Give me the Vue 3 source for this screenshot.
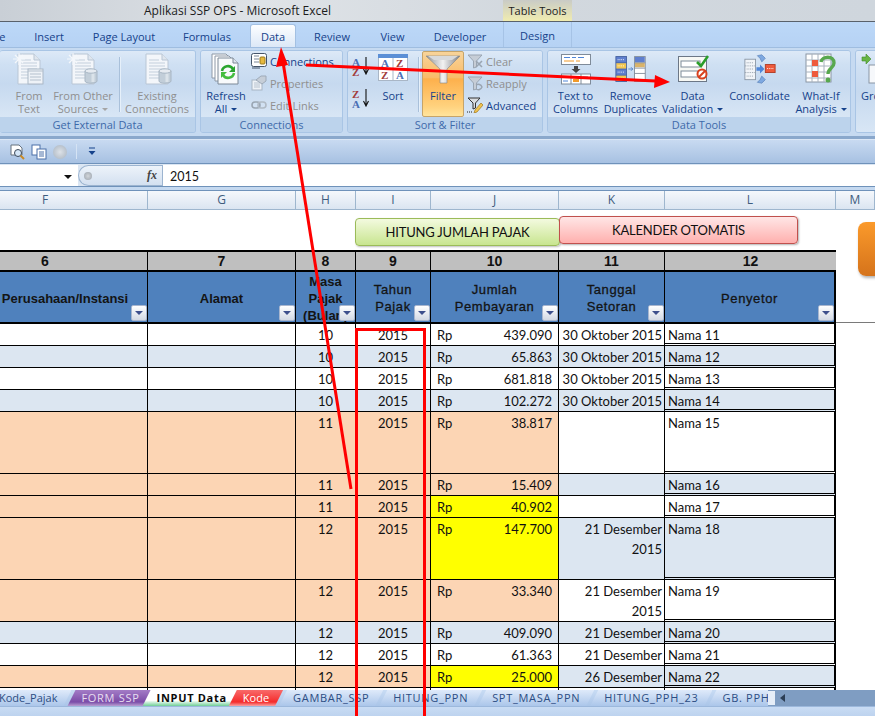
<template>
    <div class="excel">
        <svg class="defs" width="0" height="0">
            <symbol id="page" viewBox="0 0 32 32">
                <path d="M5 1H21L27 7V31H5Z" fill="#f3f6fa" stroke="#b9c6d5" />
                <path d="M21 1V7H27" fill="#dfe6ee" stroke="#b9c6d5" />
                <path d="M8 7H18M8 10H24M8 13H24M8 16H24M8 19H24M8 22H24M8 25H24" stroke="#c3cfdc" />
            </symbol>
            <symbol id="star" viewBox="0 0 12 12">
                <path d="M6 0V12M0 6H12M2 2L10 10M10 2L2 10" stroke="#f4f7fb" stroke-width="1.2" />
            </symbol>
            <symbol id="cyl" viewBox="0 0 14 16">
                <path d="M1 3V13C1 16 13 16 13 13V3Z" fill="#c2ced9" stroke="#a8b6c4" />
                <path d="M9 4V14" stroke="#dbe3ea" stroke-width="3" />
                <ellipse cx="7" cy="3" rx="6" ry="2.2" fill="#e6ebf1" stroke="#a8b6c4" />
            </symbol>
            <symbol id="funnel" viewBox="0 0 16 16">
                <path d="M1 2H15L9.5 8V14L6.5 15V8Z" fill="#c6cdd6" stroke="#9aa5b2" />
            </symbol>
        </svg>

        <header class="titlebar">
            <span class="title">Aplikasi SSP OPS - Microsoft Excel</span>
            <span class="context">Table Tools</span>
        </header>

        <nav class="tabs">
            <span v-for="tab in ribbonTabs" :key="tab.name" class="tab" :class="{ 'tab_active': tab.name === 'Data', 'tab_design': tab.name === 'Design' }" :style="{ width: tab.w + 'px' }">{{ tab.name }}</span>
        </nav>

        <div class="ribbon">
            <section class="group group-ext">
                <div class="group-body">
                    <div class="big big-text">
                        <svg class="ico" viewBox="0 0 32 32">
                            <use href="#page" width="32" height="32" />
                            <use href="#star" x="0" y="0" width="12" height="12" />
                            <rect x="15" y="16" width="15" height="15" fill="#eef2f7" stroke="#aab7c6" />
                            <path d="M15 18H30M17 21H28M17 24H28M17 27H28" stroke="#b4c0cd" />
                        </svg>
                        <span class="off">From<br>Text</span>
                    </div>
                    <div class="big big-other">
                        <svg class="ico" viewBox="0 0 32 32">
                            <use href="#page" width="32" height="32" />
                            <use href="#star" x="0" y="0" width="12" height="12" />
                            <use href="#cyl" x="17" y="15" width="14" height="16" />
                        </svg>
                        <span class="off">From Other<br>Sources <i class="caret caret_off"></i></span>
                    </div>
                    <div class="sep sep-ext"></div>
                    <div class="big big-exist">
                        <svg class="ico" viewBox="0 0 32 32">
                            <use href="#page" width="32" height="32" />
                            <use href="#cyl" x="17" y="15" width="14" height="16" />
                        </svg>
                        <span class="off">Existing<br>Connections</span>
                    </div>
                </div>
                <div class="group-label">Get External Data</div>
            </section>

            <section class="group group-conn">
                <div class="group-body">
                    <div class="big big-refresh">
                        <svg class="ico" viewBox="0 0 32 32">
                            <path d="M2 1H16L20 5V25H2Z" fill="#fff" stroke="#8d98a6" />
                            <path d="M5 3H19L23 7V28H5Z" fill="#fff" stroke="#8d98a6" />
                            <path d="M8 5H23L28 10V31H8Z" fill="#f8fafc" stroke="#7d8997" />
                            <path d="M23 5V10H28" fill="#dfe6ee" stroke="#7d8997" />
                            <path d="M12 18A6 6 0 0 1 23 16" fill="none" stroke="#2aa52f" stroke-width="2.6" />
                            <path d="M25 13V19H19Z" fill="#2aa52f" />
                            <path d="M24 20A6 6 0 0 1 13 22" fill="none" stroke="#45bd3f" stroke-width="2.6" />
                            <path d="M11 25V19H17Z" fill="#45bd3f" />
                        </svg>
                        <span class="on">Refresh<br>All <i class="caret"></i></span>
                    </div>
                    <div class="small-col">
                        <div class="small">
                            <svg class="ico-s" viewBox="0 0 16 16">
                                <rect x="0.5" y="0.5" width="15" height="13" rx="2" fill="#fff" stroke="#44546a" />
                                <path d="M3 3H8M3 6H8M3 9H8" stroke="#7a8797" />
                                <rect x="9" y="4" width="5" height="7" rx="1" fill="#e6b93f" stroke="#9a7a1d" />
                                <path d="M1 15H9" stroke="#44546a" />
                            </svg>
                            <span class="on">Connections</span>
                        </div>
                        <div class="small">
                            <svg class="ico-s" viewBox="0 0 16 16">
                                <rect x="1" y="5" width="10" height="10" fill="#eef2f7" stroke="#a8b5c4" />
                                <path d="M3 8H9M3 10H9M3 12H9" stroke="#b8c3cf" />
                                <path d="M5 5L10 1H15V6L11 9Z" fill="#c6ced8" stroke="#9eaab8" />
                            </svg>
                            <span class="off">Properties</span>
                        </div>
                        <div class="small">
                            <svg class="ico-s" viewBox="0 0 16 16">
                                <rect x="1" y="5" width="8" height="6" rx="3" fill="none" stroke="#9aa6b3" stroke-width="1.6" />
                                <rect x="7" y="5" width="8" height="6" rx="3" fill="none" stroke="#b0bac5" stroke-width="1.6" />
                            </svg>
                            <span class="off">Edit Links</span>
                        </div>
                    </div>
                </div>
                <div class="group-label">Connections</div>
            </section>

            <section class="group group-sort">
                <div class="group-body">
                    <div class="az-col">
                        <svg class="ico-az" viewBox="0 0 20 22">
                            <text x="1" y="10" class="az az_blue">A</text>
                            <text x="1" y="20" class="az az_red">Z</text>
                            <path d="M15 1V17M12.5 13L15 18L17.5 13" fill="none" stroke="#111" stroke-width="1.1" />
                        </svg>
                        <svg class="ico-az" viewBox="0 0 20 22">
                            <text x="1" y="10" class="az az_red">Z</text>
                            <text x="1" y="20" class="az az_blue">A</text>
                            <path d="M15 1V17M12.5 13L15 18L17.5 13" fill="none" stroke="#111" stroke-width="1.1" />
                        </svg>
                    </div>
                    <div class="big big-sort">
                        <svg class="ico" viewBox="0 0 32 32">
                            <rect x="1.5" y="1.5" width="29" height="26" fill="#fff" stroke="#a9b6c6" />
                            <rect x="1" y="1" width="30" height="4" fill="#5b8fd6" />
                            <path d="M16 5V28M1 16H31" stroke="#a9b6c6" />
                            <text x="4" y="14" class="az az_blue">A</text>
                            <text x="19" y="14" class="az az_red">Z</text>
                            <text x="4" y="26" class="az az_red">Z</text>
                            <text x="19" y="26" class="az az_blue">A</text>
                        </svg>
                        <span class="on">Sort<br>&nbsp;</span>
                    </div>
                    <div class="sep sep-sort"></div>
                    <div class="filter-btn">
                        <svg class="ico-filter" viewBox="0 0 36 30">
                            <defs>
                                <linearGradient id="fun" x1="0" x2="1" y1="0" y2="0">
                                    <stop offset="0" stop-color="#8f9296" />
                                    <stop offset="0.5" stop-color="#f2f2f2" />
                                    <stop offset="1" stop-color="#7c7f84" />
                                </linearGradient>
                            </defs>
                            <path d="M1 2H35L22 15V29H15V15Z" fill="url(#fun)" stroke="#85878a" stroke-width="0.6" />
                            <path d="M3 2H33L27 6H9Z" fill="#d8dadc" />
                        </svg>
                        <span class="on">Filter</span>
                    </div>
                    <div class="small-col small-col-filter">
                        <div class="small">
                            <svg class="ico-s" viewBox="0 0 16 16">
                                <use href="#funnel" width="16" height="16" />
                                <path d="M9 8L15 14M15 8L9 14" stroke="#9aa5b2" stroke-width="1.6" />
                            </svg>
                            <span class="off">Clear</span>
                        </div>
                        <div class="small">
                            <svg class="ico-s" viewBox="0 0 16 16">
                                <use href="#funnel" width="16" height="16" />
                                <path d="M9 10A4 4 0 0 1 15 12A4 4 0 0 1 9 14" fill="none" stroke="#9aa5b2" stroke-width="1.4" />
                            </svg>
                            <span class="off">Reapply</span>
                        </div>
                        <div class="small">
                            <svg class="ico-s" viewBox="0 0 16 16">
                                <path d="M1 1H13L8.5 6V11L6 12V6Z" fill="#d9dce0" stroke="#333" />
                                <path d="M8 13L14 6L16 8L10 15L7 16Z" fill="#f0c34f" stroke="#a1771e" stroke-width="0.7" />
                                <path d="M0 15H5" stroke="#222" stroke-dasharray="1 1" />
                            </svg>
                            <span class="on">Advanced</span>
                        </div>
                    </div>
                </div>
                <div class="group-label">Sort &amp; Filter</div>
            </section>

            <section class="group group-tools">
                <div class="group-body">
                    <div class="big big-ttc">
                        <svg class="ico ico-wide" viewBox="0 0 32 32">
                            <rect x="1.5" y="1.5" width="29" height="10" fill="#fff" stroke="#7f8b99" />
                            <path d="M4 4.5H10M12 4.5H16M18 4.5H24" stroke="#4f86d8" />
                            <path d="M4 8H14M16 8H20" stroke="#f09a2a" />
                            <path d="M14 13H18V16H20.5L16 20L11.5 16H14Z" fill="#444" />
                            <rect x="1.5" y="21" width="29" height="10" fill="#fff" stroke="#7f8b99" />
                            <path d="M11 21V31M21 21V31" stroke="#7f8b99" />
                            <path d="M3 24H9M13 24H19M23 24H28M3 28H8" stroke="#4f86d8" />
                            <rect x="13" y="26" width="6" height="3" fill="#f09a2a" />
                        </svg>
                        <span class="on">Text to<br>Columns</span>
                    </div>
                    <div class="big big-dup">
                        <svg class="ico ico-wide" viewBox="0 0 36 32">
                            <rect x="1" y="2" width="12" height="28" fill="#5f7fce" stroke="#46629f" />
                            <path d="M1 9H13M1 16H13M1 23H13" stroke="#46629f" />
                            <rect x="1.5" y="9.5" width="11" height="6" fill="#f3c64f" />
                            <rect x="1.5" y="23.5" width="11" height="6" fill="#f3c64f" />
                            <path d="M3 5.5H11M3 12.5H11M3 19.5H11M3 26.5H11" stroke="#fff" stroke-dasharray="1 1" />
                            <path d="M15 16H20M18 14L20 16L18 18" fill="none" stroke="#4f7fc8" />
                            <rect x="22" y="2" width="12" height="28" fill="#fff" stroke="#7f8b99" />
                            <rect x="22.5" y="2.5" width="11" height="6" fill="#5f7fce" />
                            <rect x="22.5" y="9" width="11" height="5" fill="#d9b36a" />
                            <path d="M22 9H34M22 15H34M22 21H34" stroke="#7f8b99" />
                        </svg>
                        <span class="on">Remove<br>Duplicates</span>
                    </div>
                    <div class="big big-val">
                        <svg class="ico ico-wide" viewBox="0 0 32 32">
                            <rect x="1.5" y="3.5" width="28" height="25" fill="#f7f8f4" stroke="#6c7786" />
                            <rect x="4" y="8" width="19" height="6" fill="#fff" stroke="#7f8b99" />
                            <rect x="4" y="18" width="19" height="6" fill="#fff" stroke="#7f8b99" />
                            <path d="M20 9L24 13L31 3" fill="none" stroke="#2a9d2a" stroke-width="2.6" />
                            <circle cx="25" cy="21" r="4.5" fill="#fff" stroke="#d8401e" stroke-width="2" />
                            <path d="M22 24L28 18" stroke="#d8401e" stroke-width="2" />
                        </svg>
                        <span class="on">Data<br>Validation <i class="caret"></i></span>
                    </div>
                    <div class="big big-cons">
                        <svg class="ico ico-wide" viewBox="0 0 36 32">
                            <rect x="1" y="5" width="12" height="23" fill="#f1f4f8" stroke="#8a96a4" />
                            <path d="M1 12.5H13M1 20H13M3 9H11M3 16H11M3 24H11" stroke="#8a96a4" stroke-dasharray="1 1" />
                            <path d="M14 14H18V11L23 16L18 21V18H14Z" fill="#4f86d8" />
                            <rect x="24" y="11" width="11" height="9" fill="#ee5a3c" stroke="#b03a22" />
                            <path d="M26 15.5H33" stroke="#fff" stroke-dasharray="1 1" />
                            <path d="M15 1L20 0L24 4L20 8L18 4Z" fill="#7ea8e0" stroke="#4a74ae" stroke-width="0.6" />
                            <path d="M15 31L20 32L24 28L20 24L18 28Z" fill="#7ea8e0" stroke="#4a74ae" stroke-width="0.6" />
                        </svg>
                        <span class="on">Consolidate<br>&nbsp;</span>
                    </div>
                    <div class="big big-whatif">
                        <svg class="ico ico-wide" viewBox="0 0 32 32">
                            <rect x="1" y="1" width="25" height="28" fill="#fff" stroke="#8a96a4" />
                            <path d="M7 1V29M13 1V29M19 1V29M1 7H26M1 13H26M1 19H26M1 25H26" stroke="#a8b2be" />
                            <rect x="7" y="7" width="6" height="6" fill="#ee5a3c" />
                            <rect x="7" y="18" width="6" height="6" fill="#ee5a3c" />
                            <path d="M16 9C17 3 29 2 29 10C29 15 23 15 23 21" fill="none" stroke="#58a84e" stroke-width="3.4" />
                            <circle cx="23" cy="27" r="2.5" fill="#58a84e" />
                        </svg>
                        <span class="on">What-If<br>Analysis <i class="caret"></i></span>
                    </div>
                </div>
                <div class="group-label">Data Tools</div>
            </section>

            <section class="group group-next">
                <div class="group-body">
                    <div class="big big-group">
                        <svg class="ico" viewBox="0 0 32 32">
                            <path d="M1 4H5V1L10 6L5 11V8H1Z" fill="#67b544" stroke="#3f8a2a" stroke-width="0.6" />
                            <rect x="8" y="12" width="24" height="18" fill="#f6f8fb" stroke="#8a96a4" />
                        </svg>
                        <span class="on">Group<br>&nbsp;</span>
                    </div>
                </div>
            </section>
        </div>

        <div class="qat">
            <svg class="qat-ico" viewBox="0 0 16 16">
                <path d="M2 1H10L13 4V11H2Z" fill="#fff" stroke="#66727f" />
                <circle cx="9" cy="9" r="3.5" fill="#d5e6f7" stroke="#3c4a5a" />
                <path d="M11.5 11.5L15 15" stroke="#c98a24" stroke-width="2" />
            </svg>
            <svg class="qat-ico" viewBox="0 0 16 16">
                <rect x="1" y="1" width="8" height="10" fill="#fff" stroke="#4c70a8" />
                <rect x="6" y="5" width="9" height="10" fill="#fff" stroke="#4c70a8" />
                <path d="M8 8H13M8 10H13M8 12H13" stroke="#4c70a8" />
            </svg>
            <span class="qat-ball"></span>
            <span class="qat-sep"></span>
            <svg class="qat-more" viewBox="0 0 8 9">
                <path d="M1 1H7" stroke="#15428b" />
                <path d="M0.5 4H7.5L4 8Z" fill="#15428b" />
            </svg>
        </div>

        <div class="formula">
            <div class="name-box"><i class="name-arrow"></i></div>
            <div class="fx-box">
                <span class="fx-dot"></span>
                <span class="fx">fx</span>
            </div>
            <div class="formula-input">2015</div>
        </div>

        <div class="col-heads">
            <div v-for="col in cols" :key="col.name" class="col-head" :style="{ width: col.w + 'px' }">{{ col.name }}</div>
        </div>

        <main class="sheet">
            <div class="shape shape-green">HITUNG JUMLAH PAJAK</div>
            <div class="shape shape-pink">KALENDER OTOMATIS</div>
            <div class="shape shape-orange"></div>

            <div class="row row-num">
                <div v-for="(col, i) in dataCols" :key="col.name" class="num" :style="{ width: col.w + 'px' }">{{ i + 6 }}</div>
            </div>
            <div class="row row-head">
                <div v-for="(col, i) in dataCols" :key="col.name" class="head" :class="{ 'head_wide': i > 2 }" :style="{ width: col.w + 'px' }">
                    <span>
                        <template v-for="(line, k) in headers[i]" :key="k"><br v-if="k">{{ line }}</template>
                    </span>
                    <i class="drop"><i></i></i>
                </div>
                <div class="head-rest"></div>
            </div>
            <div v-for="(r, n) in rows" :key="n" class="row" :style="{ height: r.h + 'px' }">
                <div class="cell" :class="r.base" :style="{ width: dataCols[0].w + 'px' }"></div>
                <div class="cell" :class="r.base" :style="{ width: dataCols[1].w + 'px' }"></div>
                <div class="cell cell-c" :class="r.base" :style="{ width: dataCols[2].w + 'px' }">{{ r.mon }}</div>
                <div class="cell cell-c" :class="r.base" :style="{ width: dataCols[3].w + 'px' }">{{ r.mon ? 2015 : '' }}</div>
                <div class="cell cell-j" :class="r.j" :style="{ width: dataCols[4].w + 'px' }">
                    <span>{{ r.mon ? 'Rp' : '' }}</span><span>{{ r.amt }}</span>
                </div>
                <div class="cell cell-k" :class="r.k" :style="{ width: dataCols[5].w + 'px' }">{{ r.date }}</div>
                <div class="cell cell-l" :class="r.k" :style="{ width: dataCols[6].w + 'px' }">{{ r.name }}</div>
            </div>
        </main>

        <div class="sheet-tabs">
            <div class="stabs">
                <span v-for="t in sheetTabs" :key="t.name" class="stab" :class="t.cls">{{ t.name }}</span>
            </div>
            <div class="scroll-end">
                <span class="scroll-box"></span>
                <i class="scroll-left"></i>
            </div>
        </div>

        <footer class="status">
            <span class="status-avg">Average: 20</span>
        </footer>

        <svg class="marks" viewBox="0 0 875 716">
            <path d="M356.5 716V329.5H424.5V716" fill="none" stroke="#f00" stroke-width="3" />
            <path d="M351 489L283 62" stroke="#f00" stroke-width="3" />
            <path d="M281 47L288 65L276 67Z" fill="#f00" />
            <path d="M306 65L656 81" stroke="#f00" stroke-width="3" />
            <path d="M670 82L655 75L654 88Z" fill="#f00" />
        </svg>
    </div>
</template>

<script setup>
    const ribbonTabs = [
        { name: 'Home', w: 60 },
        { name: 'Insert', w: 58 },
        { name: 'Page Layout', w: 92 },
        { name: 'Formulas', w: 74 },
        { name: 'Data', w: 46 },
        { name: 'Review', w: 72 },
        { name: 'View', w: 49 },
        { name: 'Developer', w: 86 },
        { name: 'Design', w: 69 }
    ]

    const cols = [
        { name: 'F', w: 148 },
        { name: 'G', w: 148 },
        { name: 'H', w: 60 },
        { name: 'I', w: 75 },
        { name: 'J', w: 128 },
        { name: 'K', w: 106 },
        { name: 'L', w: 171 },
        { name: 'M', w: 39 }
    ]
    const dataCols = cols.slice(0, 7)

    const headers = [
        ['Perusahaan/Instansi'],
        ['Alamat'],
        ['Masa', 'Pajak', '(Bulan)'],
        ['Tahun', 'Pajak'],
        ['Jumlah', 'Pembayaran'],
        ['Tanggal', 'Setoran'],
        ['Penyetor']
    ]

    const rows = [
        { h: 22, base: 'w', j: 'w', k: 'w', mon: 10, amt: '439.090', date: '30 Oktober 2015', name: 'Nama 11' },
        { h: 22, base: 'b', j: 'b', k: 'b', mon: 10, amt: '65.863', date: '30 Oktober 2015', name: 'Nama 12' },
        { h: 22, base: 'w', j: 'w', k: 'w', mon: 10, amt: '681.818', date: '30 Oktober 2015', name: 'Nama 13' },
        { h: 22, base: 'b', j: 'b', k: 'b', mon: 10, amt: '102.272', date: '30 Oktober 2015', name: 'Nama 14' },
        { h: 62, base: 'o', j: 'o', k: 'w', mon: 11, amt: '38.817', date: '', name: 'Nama 15' },
        { h: 22, base: 'o', j: 'o', k: 'b', mon: 11, amt: '15.409', date: '', name: 'Nama 16' },
        { h: 22, base: 'o', j: 'y', k: 'w', mon: 11, amt: '40.902', date: '', name: 'Nama 17' },
        { h: 62, base: 'o', j: 'y', k: 'b', mon: 12, amt: '147.700', date: '21 Desember 2015', name: 'Nama 18' },
        { h: 42, base: 'o', j: 'o', k: 'w', mon: 12, amt: '33.340', date: '21 Desember 2015', name: 'Nama 19' },
        { h: 22, base: 'b', j: 'b', k: 'b', mon: 12, amt: '409.090', date: '21 Desember 2015', name: 'Nama 20' },
        { h: 22, base: 'w', j: 'w', k: 'w', mon: 12, amt: '61.363', date: '21 Desember 2015', name: 'Nama 21' },
        { h: 22, base: 'o', j: 'y', k: 'b', mon: 12, amt: '25.000', date: '26 Desember 2015', name: 'Nama 22' },
        { h: 22, base: 'w', j: 'w', k: 'w', mon: '', amt: '', date: '', name: '' }
    ]

    const sheetTabs = [
        { name: 'Kode_Pajak', cls: 'stab-first' },
        { name: 'FORM SSP', cls: 'stab-purple' },
        { name: 'INPUT Data', cls: 'stab-active' },
        { name: 'Kode', cls: 'stab-red' },
        { name: 'GAMBAR_SSP', cls: '' },
        { name: 'HITUNG_PPN', cls: '' },
        { name: 'SPT_MASA_PPN', cls: '' },
        { name: 'HITUNG_PPH_23', cls: '' },
        { name: 'GB. PPH', cls: '' }
    ]
</script>

<style>
    html,
    body {
        margin: 0;
        background: #fff;
    }
</style>

<style scoped>
    .excel {
        width: 875px;
        height: 716px;
        position: relative;
        overflow: hidden;
        display: flex;
        flex-direction: column;
        font-family: "Open Sans", "Noto Sans", sans-serif;
        font-size: 11px;
        color: #15428b;
        background: #c5d9f0;
    }

    .defs {
        position: absolute;
    }

    .titlebar {
        height: 22px;
        flex: none;
        box-sizing: border-box;
        display: flex;
        position: relative;
        padding-left: 144px;
        background: linear-gradient(90deg, #c9cfd6, #dfe3e7 30%, #d2d8de 60%, #cfd6dd);
        border-bottom: 1px solid #59616b;
        color: #1c1c1c;
        font-size: 12px;
        line-height: 21px;
    }

    .context {
        position: absolute;
        left: 503px;
        top: 0;
        width: 69px;
        height: 21px;
        text-align: center;
        font-size: 11px;
        background: linear-gradient(#c9cbc6, #f0ecb0);
    }

    .tabs {
        height: 25px;
        flex: none;
        display: flex;
        align-items: flex-end;
        margin-left: -40px;
        background: linear-gradient(#bcd8f8, #b6d2f4);
        font-size: 11px;
    }

    .tab {
        flex: none;
        height: 23px;
        line-height: 25px;
        box-sizing: border-box;
        text-align: center;
        white-space: nowrap;
    }

    .tab_active {
        margin-left: 6px;
        border: 1px solid #a3c0e2;
        border-bottom: none;
        border-radius: 3px 3px 0 0;
        background: linear-gradient(#fdfeff, #dce8f7);
        line-height: 23px;
    }

    .tab_design {
        height: 25px;
        line-height: 27px;
        border-left: 1px solid #a6c3e6;
        border-right: 1px solid #a6c3e6;
    }

    .ribbon {
        height: 92px;
        flex: none;
        box-sizing: border-box;
        display: flex;
        gap: 4px;
        padding-top: 2px;
        background: #c6daf1;
        border-top: 1px solid #9fbde0;
        border-bottom: 3px solid #8aa8cc;
    }

    .group {
        flex: none;
        height: 83px;
        box-sizing: border-box;
        display: flex;
        flex-direction: column;
        border: 1px solid #a9c5e5;
        border-radius: 3px;
        overflow: hidden;
    }

    .group-ext {
        width: 196px;
        border-left: none;
    }

    .group-conn {
        width: 143px;
    }

    .group-sort {
        width: 196px;
    }

    .group-tools {
        width: 304px;
    }

    .group-next {
        width: 30px;
    }

    .group-body {
        flex: 1;
        min-height: 0;
        display: flex;
        background: linear-gradient(#dde9f7, #cfe0f3 20%, #c6d9ef 50%, #d8e6f5);
    }

    .group-label {
        height: 15px;
        flex: none;
        text-align: center;
        line-height: 15px;
        color: #3e6aaa;
        background: #bcd3ec;
    }

    .big {
        flex: none;
        display: flex;
        flex-direction: column;
        align-items: center;
        padding-top: 2px;
        text-align: center;
        line-height: 13px;
        white-space: nowrap;
    }

    .big span {
        margin-top: 4px;
    }

    .ico {
        width: 32px;
        height: 32px;
        flex: none;
    }

    .ico-wide {
        width: 32px;
        height: 32px;
    }

    .big-text {
        width: 52px;
        margin-left: 3px;
    }

    .big-other {
        width: 56px;
    }

    .big-exist {
        width: 74px;
    }

    .big-refresh {
        width: 50px;
    }

    .big-sort {
        width: 36px;
    }

    .big-ttc {
        width: 55px;
    }

    .big-dup {
        width: 55px;
    }

    .big-val {
        width: 69px;
    }

    .big-cons {
        width: 65px;
    }

    .big-whatif {
        width: 58px;
    }

    .big-group {
        width: 30px;
        margin-left: 5px;
        align-items: flex-start;
    }

    .sep {
        width: 1px;
        margin-top: 6px;
        height: 55px;
        flex: none;
        background: #a9c0da;
        box-shadow: 1px 0 0 #e6f0fa;
    }

    .sep-ext {
        margin-left: 8px;
    }

    .sep-sort {
        margin-left: 7px;
    }

    .on {
        color: #15428b;
    }

    .off {
        color: #8f8f8f;
    }

    .caret {
        display: inline-block;
        border: 3px solid transparent;
        border-top: 3px solid #15428b;
        border-bottom: none;
        vertical-align: 2px;
        margin-left: 1px;
    }

    .caret_off {
        border-top-color: #a5a5a5;
    }

    .small-col {
        flex: none;
        display: flex;
        flex-direction: column;
        margin-top: -1px;
    }

    .small-col-filter {
        margin-left: 3px;
    }

    .small {
        height: 22px;
        display: flex;
        align-items: center;
        gap: 3px;
    }

    .ico-s {
        width: 16px;
        height: 16px;
        flex: none;
    }

    .az-col {
        width: 27px;
        padding: 5px 0 0 3px;
        box-sizing: border-box;
        display: flex;
        flex-direction: column;
        gap: 10px;
        flex: none;
    }

    .ico-az {
        width: 20px;
        height: 22px;
    }

    .az {
        font-family: "Liberation Serif", serif;
        font-weight: 700;
        font-size: 11px;
    }

    .az_blue {
        fill: #4a6fb5;
    }

    .az_red {
        fill: #a23b3b;
    }

    .filter-btn {
        width: 42px;
        height: 66px;
        flex: none;
        box-sizing: border-box;
        margin-left: 3px;
        display: flex;
        flex-direction: column;
        align-items: center;
        border: 1px solid #c6a469;
        border-radius: 2px;
        background: linear-gradient(#f8d49a, #f9bb68 40%, #fdb04c 42%, #ffd27e 85%, #ffe49c);
    }

    .ico-filter {
        width: 36px;
        height: 30px;
        margin-top: 2px;
    }

    .filter-btn span {
        margin-top: 4px;
    }

    .qat {
        height: 25px;
        flex: none;
        box-sizing: border-box;
        display: flex;
        align-items: center;
        gap: 6px;
        padding-left: 9px;
        background: linear-gradient(#c8daf1, #a7c1e2);
        border-top: 1px solid #dbe7f6;
        border-bottom: 1px solid #6f92ba;
    }

    .qat-ico {
        width: 16px;
        height: 16px;
    }

    .qat-ball {
        width: 14px;
        height: 14px;
        border-radius: 50%;
        background: radial-gradient(#dde2e8, #a8b3bf);
    }

    .qat-sep {
        width: 1px;
        height: 15px;
        margin-left: 3px;
        background: #d5e3f4;
    }

    .qat-more {
        width: 8px;
        height: 9px;
        margin-left: 5px;
    }

    .formula {
        height: 23px;
        flex: none;
        box-sizing: border-box;
        display: flex;
        border-bottom: 1px solid #6f92ba;
        padding-top: 1px;
        background: #dbe6f3;
    }

    .name-box {
        width: 78px;
        flex: none;
        position: relative;
        background: #fff;
    }

    .name-arrow {
        position: absolute;
        left: 64px;
        top: 10px;
        border: 4px solid transparent;
        border-top: 4px solid #111;
        border-bottom: none;
    }

    .fx-box {
        width: 84px;
        flex: none;
        box-sizing: border-box;
        display: flex;
        align-items: center;
        justify-content: space-between;
        padding: 0 5px 0 5px;
        border-radius: 12px 0 0 12px;
        border: 1px solid #9cb4d0;
        border-right: none;
        background: linear-gradient(#edf3fa, #d3e0f0);
    }

    .fx-dot {
        width: 8px;
        height: 8px;
        border-radius: 50%;
        background: radial-gradient(#d2d6da, #9aa2ac);
    }

    .fx {
        font-family: "Liberation Serif", serif;
        font-style: italic;
        font-weight: 700;
        font-size: 12px;
        color: #444;
    }

    .formula-input {
        flex: 1;
        padding-left: 7px;
        line-height: 23px;
        background: #fff;
        color: #111;
        font-family: "Lato", sans-serif;
        font-size: 12.5px;
        border-left: 1px solid #9cb4d0;
    }

    .col-heads {
        height: 20px;
        flex: none;
        margin-top: 3px;
        box-sizing: border-box;
        display: flex;
        border-top: 1px solid #6f92ba;
        border-bottom: 1px solid #9eb6ce;
        background: linear-gradient(#f5f8fc, #dbe5f1);
    }

    .col-head {
        flex: none;
        box-sizing: border-box;
        text-align: center;
        line-height: 18px;
        font-size: 12px;
        color: #3e5c7e;
        border-right: 1px solid #9eb6ce;
    }

    .col-head:first-child {
        padding-right: 57px;
    }

    .sheet {
        height: 480px;
        flex: none;
        box-sizing: border-box;
        padding-top: 40px;
        position: relative;
        overflow: hidden;
        background: #fff;
        color: #111;
        font-family: "Lato", sans-serif;
        font-size: 13px;
    }

    .shape {
        position: absolute;
        box-sizing: border-box;
        text-align: center;
        color: #111;
        font-size: 13px;
        letter-spacing: -0.2px;
    }

    .shape-green {
        left: 355px;
        top: 8px;
        width: 205px;
        height: 28px;
        line-height: 27px;
        border: 1px solid #9bbb59;
        border-radius: 4px;
        background: linear-gradient(#f3fadf, #c8e58f);
        box-shadow: 1px 1px 2px rgba(0, 0, 0, 0.25);
    }

    .shape-pink {
        left: 559px;
        top: 6px;
        width: 239px;
        height: 28px;
        line-height: 27px;
        border: 1px solid #c0504d;
        border-radius: 4px;
        background: linear-gradient(#ffe6e6, #ffb0ae);
        box-shadow: 1px 1px 2px rgba(0, 0, 0, 0.3);
    }

    .shape-orange {
        left: 858px;
        top: 12px;
        width: 40px;
        height: 54px;
        border-radius: 8px;
        background: linear-gradient(#fb9a2b, #d5731b);
        box-shadow: 1px 2px 3px rgba(0, 0, 0, 0.3);
    }

    .row {
        display: flex;
    }

    .row-num {
        width: 836px;
        height: 22px;
        box-sizing: border-box;
        border-top: 2px solid #000;
        border-bottom: 2px solid #000;
        border-right: 2px solid #000;
    }

    .num {
        flex: none;
        box-sizing: border-box;
        text-align: center;
        line-height: 18px;
        font-family: "Liberation Sans", sans-serif;
        font-weight: 700;
        font-size: 14px;
        background: #bfbfbf;
        border-right: 1px solid #000;
    }

    .num:first-child {
        padding-right: 57px;
    }

    .num:last-child {
        border-right: none;
    }

    .row-head {
        height: 52px;
    }

    .head {
        flex: none;
        box-sizing: border-box;
        position: relative;
        overflow: hidden;
        display: flex;
        align-items: center;
        justify-content: center;
        text-align: center;
        white-space: nowrap;
        padding-top: 2px;
        line-height: 17px;
        font-family: "Liberation Sans", sans-serif;
        font-weight: 700;
        font-size: 13px;
        color: #141414;
        background: #4f81bd;
        border-right: 1px solid #000;
        border-bottom: 2px solid #000;
    }

    .head:first-child {
        padding-right: 17px;
    }

    .head_wide {
        font-weight: 400;
        letter-spacing: 0.6px;
        -webkit-text-stroke: 0.3px #141414;
    }

    .head:nth-child(7) {
        border-right: 2px solid #000;
    }

    .head-rest {
        flex: 1;
        box-sizing: border-box;
        border-bottom: 1px solid #7a7a7a;
        margin-bottom: 1px;
    }

    .drop {
        position: absolute;
        right: 0;
        bottom: 1px;
        width: 16px;
        height: 16px;
        box-sizing: border-box;
        display: flex;
        align-items: center;
        justify-content: center;
        border: 1px solid #a8b6cf;
        border-radius: 2px;
        background: linear-gradient(#fff, #d3d9e4);
    }

    .drop i {
        border: 4px solid transparent;
        border-top: 4px solid #3d4f8c;
        border-bottom: none;
    }

    .cell {
        flex: none;
        box-sizing: border-box;
        overflow: hidden;
        padding-top: 1px;
        line-height: 20px;
        border-right: 1px solid #000;
        border-bottom: 1px solid #000;
    }

    .cell-c {
        text-align: center;
    }

    .cell-j {
        display: flex;
        justify-content: space-between;
        padding: 1px 6px 0;
    }

    .cell-k {
        text-align: right;
        padding-right: 2px;
    }

    .cell-l {
        padding-left: 3px;
        border-right: 2px solid #000;
        border-bottom: 3px double #000;
    }

    .w {
        background: #fff;
    }

    .b {
        background: #dce6f1;
    }

    .o {
        background: #fcd5b4;
    }

    .y {
        background: #ff0;
    }

    .sheet-tabs {
        height: 16px;
        flex: none;
        display: flex;
        background: linear-gradient(#c9dcf4, #aac5e8);
        border-bottom: 1px solid #9cb8dc;
    }

    .stabs {
        width: 768px;
        flex: none;
        display: flex;
        overflow: hidden;
    }

    .stab {
        flex: none;
        box-sizing: border-box;
        height: 16px;
        line-height: 16px;
        padding: 0 14px;
        margin-right: -4px;
        letter-spacing: 0.7px;
        white-space: nowrap;
        color: #2c4d83;
        background: linear-gradient(#dfeafa, #abc6ea);
        clip-path: polygon(8px 0, 100% 0, calc(100% - 8px) 100%, 0 100%);
    }

    .stab-first {
        margin-left: -15px;
        letter-spacing: 0;
    }

    .stab-purple {
        color: #e7dff0;
        background: linear-gradient(#a37cc6, #7b4ca8 75%, #b9a0d2);
    }

    .stab-active {
        margin-left: -7px;
        color: #0a0a0a;
        font-weight: 700;
        letter-spacing: 0.7px;
        background: linear-gradient(#fff, #fff 65%, #6fcf97);
    }

    .stab-red {
        margin-left: -8px;
        letter-spacing: 0;
        color: #fff;
        background: linear-gradient(#f86a6a, #f52b2b 75%, #f9a5a5);
    }

    .scroll-end {
        flex: 1;
        display: flex;
        align-items: center;
        gap: 5px;
        background: #7f9dc2;
    }

    .scroll-box {
        width: 7px;
        height: 14px;
        background: #e6eef8;
    }

    .scroll-left {
        border: 4px solid transparent;
        border-right: 5px solid #2c3e55;
        border-left: none;
    }

    .status {
        height: 10px;
        flex: none;
        overflow: hidden;
        position: relative;
        background: linear-gradient(#c9dcf4, #bcd2ee);
    }

    .status-avg {
        position: absolute;
        left: 818px;
        top: 5px;
        white-space: nowrap;
        color: #20406e;
        font-size: 11px;
    }

    .marks {
        position: absolute;
        top: 0;
        left: 0;
        width: 875px;
        height: 716px;
        pointer-events: none;
    }
</style>
